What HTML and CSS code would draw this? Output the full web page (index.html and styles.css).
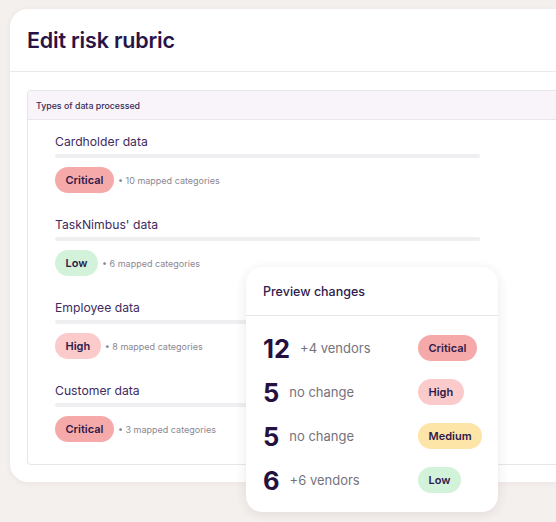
FILE: index.html
```html
<!DOCTYPE html>
<html lang="en">
<head>
<meta charset="utf-8">
<title>Edit risk rubric</title>
<link rel="stylesheet" href="styles.css">
</head>
<body>
<div class="card">
  <div class="card-head"><h1 class="title">Edit risk rubric</h1></div>
  <div class="panel">
    <div class="panel-head">Types of data processed</div>
    <div class="rows">
      <div class="row">
        <div class="name">Cardholder data</div>
        <div class="bar"></div>
        <div class="meta"><span class="badge critical">Critical</span><span class="count">• 10 mapped categories</span></div>
      </div>
      <div class="row">
        <div class="name">TaskNimbus' data</div>
        <div class="bar"></div>
        <div class="meta"><span class="badge low">Low</span><span class="count">• 6 mapped categories</span></div>
      </div>
      <div class="row">
        <div class="name">Employee data</div>
        <div class="bar"></div>
        <div class="meta"><span class="badge high">High</span><span class="count">• 8 mapped categories</span></div>
      </div>
      <div class="row">
        <div class="name">Customer data</div>
        <div class="bar"></div>
        <div class="meta"><span class="badge critical">Critical</span><span class="count">• 3 mapped categories</span></div>
      </div>
    </div>
  </div>
</div>

<div class="popup">
  <div class="popup-head">Preview changes</div>
  <div class="popup-rows">
    <div class="prow"><div class="pleft"><span class="num">12</span><span class="delta">+4 vendors</span></div><span class="badge critical">Critical</span></div>
    <div class="prow"><div class="pleft"><span class="num">5</span><span class="delta">no change</span></div><span class="badge high">High</span></div>
    <div class="prow"><div class="pleft"><span class="num">5</span><span class="delta">no change</span></div><span class="badge medium">Medium</span></div>
    <div class="prow"><div class="pleft"><span class="num">6</span><span class="delta">+6 vendors</span></div><span class="badge low">Low</span></div>
  </div>
</div>
</body>
</html>
```

FILE: styles.css
```css
html, body {
  margin: 0;
  padding: 0;
}
body {
  width: 556px;
  height: 522px;
  overflow: hidden;
  position: relative;
  background: #f4f0ee;
  font-family: Inter, "Noto Sans", sans-serif;
  color: #2b1748;
}
.card {
  margin: 9px 0 0 10px;
  width: 546px;
  height: 473px;
  box-sizing: border-box;
  background: #ffffff;
  border-radius: 18px 0 0 18px;
  box-shadow: 0 1px 6px rgba(60, 40, 30, 0.06);
  overflow: hidden;
}
.card-head {
  height: 63px;
  box-sizing: border-box;
  border-bottom: 1px solid #ebe9ec;
  padding-left: 17px;
  display: flex;
  align-items: center;
}
.title {
  margin: 0;
  font-size: 21.5px;
  font-weight: 600;
  letter-spacing: -0.2px;
  color: #2a1446;
}
.panel {
  margin: 18px 0 0 17px;
  height: 375px;
  box-sizing: border-box;
  border: 1px solid #e8e5ea;
  border-right: none;
  border-radius: 4px 0 0 4px;
  overflow: hidden;
}
.panel-head {
  height: 29px;
  box-sizing: border-box;
  background: #f8f4fa;
  border-bottom: 1px solid #e9e5ec;
  padding-left: 8px;
  display: flex;
  align-items: center;
  font-size: 8.8px;
  font-weight: 500;
  color: #3a2a55;
}
.rows {
  padding: 14px 0 0 27px;
  display: flex;
  flex-direction: column;
  gap: 24px;
}
.row {
  display: flex;
  flex-direction: column;
}
.name {
  font-size: 12.2px;
  line-height: 16px;
  color: #3f2b5e;
}
.bar {
  margin-top: 4px;
  width: 425px;
  height: 4px;
  border-radius: 2px;
  background: #efeef0;
}
.meta {
  margin-top: 9px;
  display: flex;
  align-items: center;
}
.badge {
  display: inline-flex;
  align-items: center;
  height: 26px;
  padding: 0 10.5px;
  border-radius: 13px;
  font-size: 11px;
  font-weight: 600;
  color: #2e1a4a;
  box-sizing: border-box;
}
.critical { background: #f5aaa9; }
.high { background: #fbcaca; }
.medium { background: #fde5a8; }
.low { background: #d3f2da; }
.count {
  margin-left: 4px;
  font-size: 9px;
  color: #8b8791;
}
.popup {
  position: absolute;
  left: 246px;
  top: 267px;
  width: 252px;
  height: 245px;
  background: #ffffff;
  border-radius: 16px;
  box-shadow: 0 2px 12px rgba(60, 40, 40, 0.10);
  overflow: hidden;
}
.popup-head {
  height: 49px;
  box-sizing: border-box;
  border-bottom: 1px solid #e7e6e9;
  padding-left: 17px;
  display: flex;
  align-items: center;
  font-size: 12.5px;
  font-weight: 500;
  color: #2f1b4c;
}
.popup-rows {
  padding-top: 10px;
}
.prow {
  height: 44px;
  padding: 0 17px;
  display: grid;
  grid-template-columns: 1fr 63px;
  align-items: center;
}
.prow .badge {
  justify-self: start;
}
.pleft {
  display: flex;
  align-items: center;
  gap: 10px;
}
.num {
  font-size: 25.5px;
  font-weight: 700;
  color: #25113f;
}
.delta {
  font-size: 13px;
  color: #76727c;
}
```
